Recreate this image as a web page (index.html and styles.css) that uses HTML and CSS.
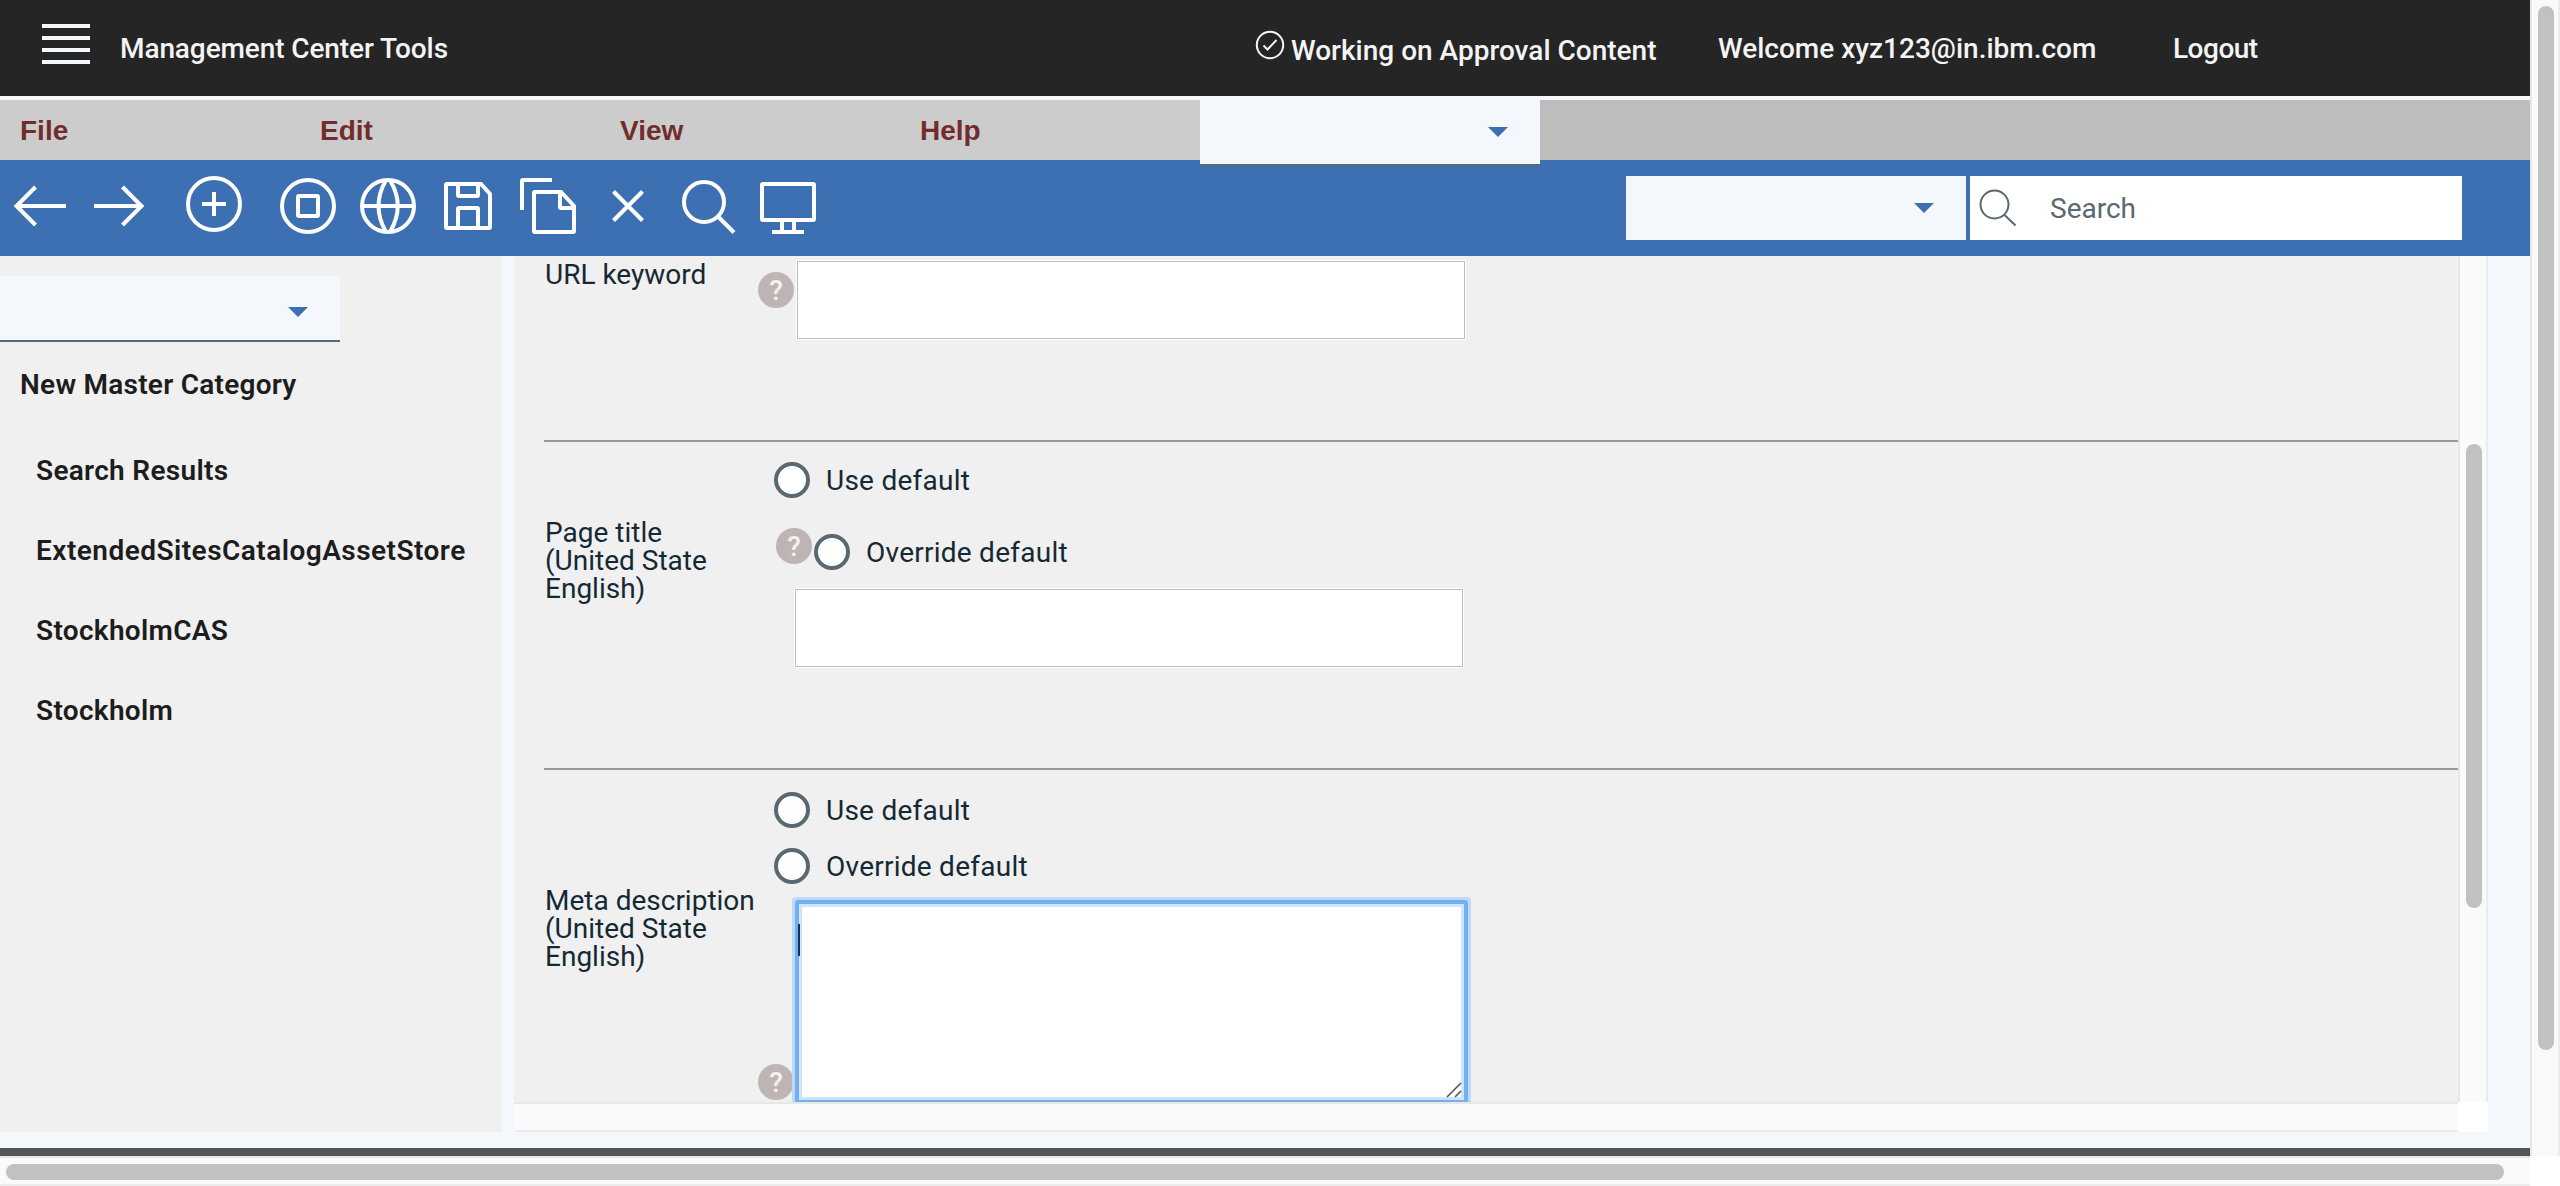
FILE: index.html
```html
<!DOCTYPE html>
<html lang="en">
<head>
<meta charset="utf-8">
<title>Management Center Tools</title>
<link rel="stylesheet" href="styles.css">
</head>
<body>
<div class="page">
  <header class="topbar">
    <button class="burger" aria-label="Menu"><i></i><i></i><i></i><i></i></button>
    <span class="brand">Management Center Tools</span>
    <span class="approval">
      <svg width="30" height="30" viewBox="0 0 30 30"><circle cx="15" cy="15" r="13.2"/><path d="M8.5 15.5l4 4 9-9.500"/></svg>
      <span>Working on Approval Content</span>
    </span>
    <span>Welcome xyz123@in.ibm.com</span>
    <span class="logout">Logout</span>
  </header>

  <nav class="menubar">
    <span>File</span><span>Edit</span><span>View</span><span>Help</span>
    <div class="select underlined"></div>
  </nav>

  <div class="toolbar">
    <svg width="80" height="96" viewBox="0 0 80 96"><path d="M66 46H16M35.500 27L16.500 46l19 19"/></svg>
    <svg width="80" height="96" viewBox="80 0 80 96"><path d="M94 46h48M122.500 27l19 19-19 19"/></svg>
    <svg width="106" height="96" viewBox="160 0 106 96"><circle cx="214" cy="44" r="26"/><path d="M202 44h24M214 32v24"/></svg>
    <svg width="82" height="96" viewBox="266 0 82 96"><circle cx="308" cy="46" r="26"/><rect x="298" y="36" width="20" height="20" rx="1"/></svg>
    <svg width="82" height="96" viewBox="348 0 82 96"><circle cx="388" cy="46" r="26"/><path d="M362 46h52M385.500 21Q371.500 46 385.500 71M390.500 21Q405 46 390.500 71"/></svg>
    <svg width="80" height="96" viewBox="430 0 80 96"><path d="M481 24H447a1 1 0 0 0-1 1v42a1 1 0 0 0 1 1h42a1 1 0 0 0 1-1V34zM458 24v11a1 1 0 0 0 1 1h18a1 1 0 0 0 1-1V24M458 68V49a1 1 0 0 1 1-1h18a1 1 0 0 1 1 1v19"/></svg>
    <svg width="90" height="96" viewBox="510 0 90 96"><path d="M522 50V21a1 1 0 0 1 1-1h29M561 32h-26a1 1 0 0 0-1 1v38a1 1 0 0 0 1 1h38a1 1 0 0 0 1-1V46zM560 32v15a1 1 0 0 0 1 1h13"/></svg>
    <svg width="70" height="96" viewBox="600 0 70 96"><path d="M613.500 31.500l29 29M642.500 31.500l-29 29"/></svg>
    <svg width="80" height="96" viewBox="670 0 80 96"><circle cx="704" cy="42" r="20"/><path d="M718 56.500l16 16"/></svg>
    <svg width="80" height="96" viewBox="750 0 80 96"><rect x="762" y="24" width="52" height="36" rx="1"/><path d="M782 60v12M794 60v12M772 72h32"/></svg>
    <div class="select"></div>
    <div class="search">
      <svg width="46" height="64" viewBox="0 0 46 64"><circle cx="24.500" cy="28.500" r="14"/><path d="M34.500 39l11 10.500"/></svg>
      <span>Search</span>
    </div>
  </div>

  <div class="work">
    <aside class="sidebar">
      <div class="select underlined"></div>
      <h2>New Master Category</h2>
      <ul>
        <li>Search Results</li>
        <li class="long">ExtendedSitesCatalogAssetStore</li>
        <li>StockholmCAS</li>
        <li>Stockholm</li>
      </ul>
    </aside>

    <main class="panel">
      <div class="form">
        <section class="field url">
          <label>URL keyword</label>
          <div class="line"><span class="help">?</span><input class="text" type="text"></div>
        </section>
        <section class="field title">
          <label>Page title<br>(United State<br>English)</label>
          <div class="controls">
            <div class="radio"><i></i><span>Use default</span></div>
            <div class="line second"><span class="help">?</span><div class="radio"><i></i><span>Override default</span></div></div>
            <input class="text" type="text">
          </div>
        </section>
        <section class="field meta">
          <label>Meta description<br>(United State<br>English)</label>
          <div class="controls">
            <div class="radio"><i></i><span>Use default</span></div>
            <div class="radio"><i></i><span>Override default</span></div>
            <div class="line"><span class="help">?</span>
              <div class="area"><i class="caret"></i>
                <svg class="grip" width="18" height="18" viewBox="0 0 18 18"><path d="M2 16L16 2M10 16l6-6"/></svg>
              </div>
            </div>
          </div>
        </section>
      </div>
      <div class="vscroll inner"><i></i></div>
      <div class="hscroll inner"></div>
      <div class="corner"></div>
    </main>
  </div>
  <footer class="bottomline"></footer>
</div>
<div class="vscroll outer"><i></i></div>
<div class="hscroll outer"><i></i></div>
<div class="corner"></div>
</body>
</html>
```
FILE: styles.css
```css
* { box-sizing: border-box; }

body {
  margin: 0;
  width: 2560px;
  height: 1186px;
  overflow: hidden;
  display: grid;
  grid-template: 1156px 30px / 2530px 30px;
  background: #fff;
  font: 400 28px/28px "Roboto", "Liberation Sans", sans-serif;
  color: #152934;
}

svg { display: block; flex: none; fill: none; }
i { display: block; }

.page {
  display: flex;
  flex-direction: column;
  background: #f4f7fb;
  overflow: hidden;
}

/* Top bar */
.topbar {
  flex: none;
  height: 96px;
  display: grid;
  grid-template-columns: 120px 1135px 463px 455px 1fr;
  align-items: center;
  padding-top: 2px;
  background: #252525;
  color: #f4f4f4;
  font-weight: 500;
}
.burger {
  display: flex;
  flex-direction: column;
  gap: 8px;
  width: 48px;
  margin: -10px 0 0 42px;
  padding: 0;
  border: 0;
  background: none;
}
.burger i { width: 48px; height: 4px; background: #f4f7fb; }
.brand { letter-spacing: -.1px; }
.logout { letter-spacing: -.5px; }
.approval { display: flex; gap: 6px; }
.approval svg { margin-top: -4px; stroke: #f4f4f4; stroke-width: 2; }
.approval > span { padding-top: 3px; }

/* Menu bar */
.menubar {
  flex: none;
  height: 60px;
  margin-top: 4px;
  display: grid;
  grid-template-columns: repeat(4, 300px) 340px;
  background: linear-gradient(90deg, #ccc 1200px, #bdbdbd 1200px);
  color: #732c2c;
  font: 700 28px/62px "Liberation Sans", Arial, sans-serif;
}
.menubar span { padding-left: 20px; }

.select {
  flex: none;
  width: 340px;
  height: 64px;
  display: flex;
  justify-content: flex-end;
  align-items: center;
  padding-right: 32px;
  background: #f4f7fb;
}
.select.underlined { height: 66px; border-bottom: 2px solid #5a6872; z-index: 1; }
.select::after {
  content: "";
  border: 10px solid transparent;
  border-top-color: #3d70b2;
  border-bottom: 0;
}

/* Tool bar */
.toolbar {
  flex: none;
  height: 96px;
  display: flex;
  align-items: center;
  padding-right: 68px;
  background: #3d70b2;
}
.toolbar > svg { stroke: #fff; stroke-width: 4; }
.toolbar .select { margin-left: auto; }
.search {
  width: 492px;
  height: 64px;
  margin-left: 4px;
  display: flex;
  align-items: center;
  gap: 34px;
  background: #fff;
  color: #5a6872;
}
.search svg { stroke: #5a6872; stroke-width: 2; }
.search span { padding-top: 2px; }

/* Work area */
.work {
  flex: none;
  height: 876px;
  display: grid;
  grid-template-columns: 502px 1974px;
  column-gap: 12px;
}
.sidebar { padding-top: 20px; background: #f0f0f0; color: #1d1d1d; letter-spacing: .3px; }
.sidebar .select { padding-top: 7px; }
.sidebar h2 { margin: 29px 0 0 20px; font-size: 28px; font-weight: 600; line-height: 28px; letter-spacing: .25px; }
.sidebar ul { margin: 32px 0 0; padding: 0 0 0 36px; list-style: none; font-weight: 600; }
.sidebar li { height: 80px; line-height: 80px; }
.sidebar .long { letter-spacing: .47px; }

.panel { display: grid; grid-template: 846px 30px / 1944px 30px; }
.form { overflow: hidden; padding-left: 30px; background: #f0f0f0; }
.field { display: grid; grid-template-columns: 214px 1fr; align-items: start; }
.field + .field { border-top: 2px solid #999; }
.field label { padding-left: 1px; white-space: nowrap; }
.line { display: flex; }
.help {
  flex: none;
  width: 36px;
  height: 36px;
  border-radius: 50%;
  background: #beb4b4;
  color: #f3f0f0;
  font-weight: 500;
  line-height: 38px;
  text-align: center;
}
.text {
  display: block;
  width: 668px;
  height: 78px;
  padding: 0 30px;
  border: 1px solid #bdbdbd;
  box-shadow: 0 0 0 1px #fff;
  background: #fff;
  font: inherit;
}
.radio { display: flex; align-items: center; gap: 16px; height: 36px; }
.radio i { width: 36px; height: 36px; border: 4px solid #5a6872; border-radius: 50%; background: #fff; }
.radio span { padding-top: 2px; letter-spacing: .25px; }
.controls > .radio { margin-left: 16px; }

.url { height: 184px; }
.url label { padding-top: 5px; }
.url .line { padding-top: 5px; }
.url .help { margin: 11px 3px 0 0; }

.title { height: 328px; }
.title label { padding-top: 77px; }
.title .controls { padding-top: 20px; }
.title .second { margin: 30px 0 0 18px; }
.title .second .radio { margin: 6px 0 0 2px; }
.title .text { margin: 19px 0 0 37px; }

.meta label { padding-top: 117px; }
.meta .controls { padding-top: 22px; }
.meta .radio + .radio { margin-top: 20px; }
.meta .line { align-items: flex-end; margin-top: 20px; }
.area {
  position: relative;
  width: 665px;
  height: 196px;
  margin-left: 5px;
  background: #fff;
  box-shadow: inset 0 0 0 3px #cfe3fa, 0 0 0 4px #73b0f0, 0 0 0 7px #bfdaf6;
  border-radius: 1px;
}
.caret { position: absolute; left: -1px; top: 20px; width: 2px; height: 32px; background: #12345a; }
.grip { position: absolute; right: 1px; bottom: 1px; stroke: #555; stroke-width: 1.6; }

/* Scroll bars */
.vscroll, .hscroll { background: #fafafa; border: 0 solid #ececec; }
.vscroll { border-width: 0 2px; border-left-color: #e7e7e7; padding-left: 6px; }
.hscroll { border-width: 2px 0; border-top-color: #e7e7e7; padding-top: 6px; }
.vscroll i, .hscroll i { border-radius: 8px; background: #c1c1c1; }
.vscroll i { width: 16px; }
.hscroll i { height: 16px; }
.vscroll.inner { padding-top: 188px; }
.vscroll.inner i { height: 464px; }
.vscroll.outer { padding-top: 6px; }
.vscroll.outer i { height: 1044px; }
.hscroll.outer i { width: 2498px; margin-left: 6px; }
.corner { background: #fff; }

.bottomline { flex: none; height: 8px; margin-top: 16px; background: #555; }
```
